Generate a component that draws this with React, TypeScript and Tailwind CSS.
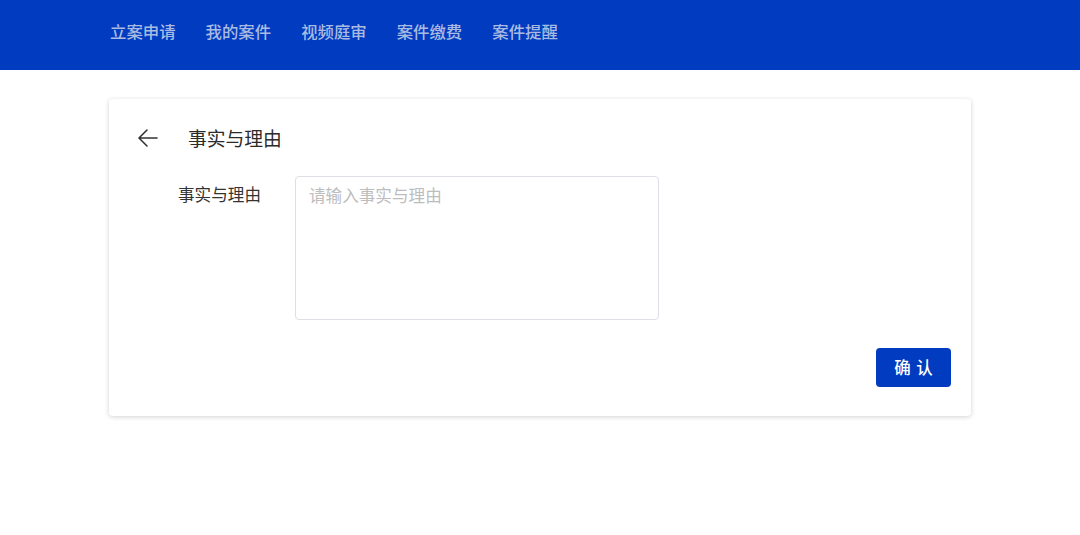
import React from "react";

const font = { fontFamily: '"Noto Sans CJK SC", "Noto Sans", sans-serif' };

export default function App() {
  const nav = ["立案申请", "我的案件", "视频庭审", "案件缴费", "案件提醒"];
  return (
    <div className="min-h-[535px] w-full bg-white" style={font}>
      <header className="h-[70px] bg-[#003bc0] flex items-center pl-[110px] gap-[30px] pb-[7px]">
        {nav.map((n) => (
          <span key={n} className="text-[16.4px] leading-none text-[#aabbe3] font-medium">
            {n}
          </span>
        ))}
      </header>
      <div className="pt-[29px] px-[109px]">
        <div className="w-[862px] h-[317px] rounded-[4px] bg-white shadow-[0_1px_5px_rgba(0,0,0,0.18)] flex flex-col">
          <div className="flex items-center h-[26px] mt-[26px] pl-[79px] relative">
            <svg
              className="absolute left-[28px] top-[3px]"
              width="22"
              height="20"
              viewBox="0 0 22 20"
              fill="none"
              stroke="#333"
              strokeWidth="1.6"
              strokeLinecap="round"
              strokeLinejoin="round"
            >
              <path d="M20 10H2.5M10 2L2 10l8 8" />
            </svg>
            <span className="text-[18.8px] leading-none text-[#2b2b2b]">事实与理由</span>
          </div>
          <div className="flex mt-[25px]">
            <label className="w-[186px] pr-[34px] text-right text-[16.6px] leading-none pt-[10px] text-[#333]">
              事实与理由
            </label>
            <textarea
              placeholder="请输入事实与理由"
              className="w-[364px] h-[144px] rounded-[4px] border border-[#dcdfe6] px-[13px] py-[7px] text-[16.6px] leading-[22px] text-[#333] placeholder:text-[#bdbdbd] resize-none outline-none"
              style={font}
            />
          </div>
          <div className="flex justify-end pr-[20px] mt-[28px]">
            <button
              className="w-[75px] h-[39px] rounded-[4px] bg-[#003bc0] text-white text-[16.5px] font-medium tracking-[1px] pl-[1px]"
              style={font}
            >
              确 认
            </button>
          </div>
        </div>
      </div>
    </div>
  );
}
